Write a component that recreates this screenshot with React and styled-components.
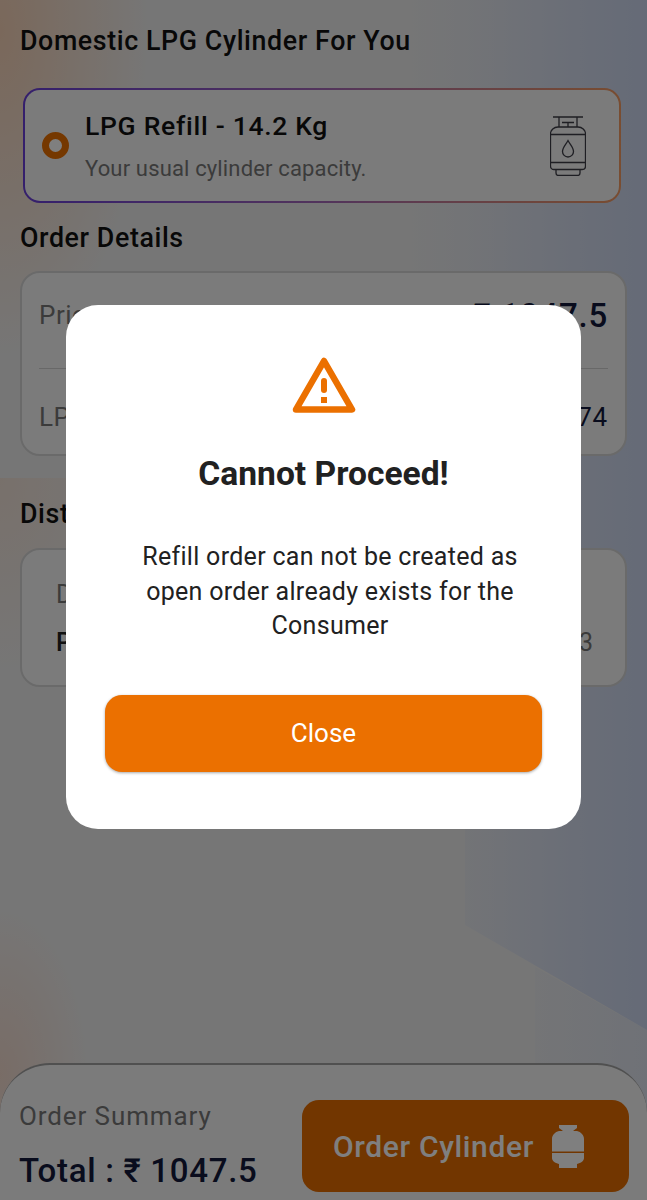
import React from 'react';
import styled, { createGlobalStyle } from 'styled-components';

const GlobalStyle = createGlobalStyle`
  html, body { margin: 0; padding: 0; }
  body { font-family: Roboto, "Liberation Sans", sans-serif; }
  * { box-sizing: border-box; }
`;

const Screen = styled.div`
  position: relative;
  width: 647px;
  height: 1200px;
  overflow: hidden;
  display: flex;
  flex-direction: column;
  padding: 25px 20px 0;
  background:
    radial-gradient(ellipse 130px 200px at 0 0, rgba(248, 205, 175, 0.36), rgba(248, 205, 175, 0)) 0 478px / 100% 722px no-repeat,
    radial-gradient(ellipse 90px 170px at 0 1075px, rgba(248, 190, 160, 0.42), rgba(248, 190, 160, 0)) 0 0 / 100% 1200px no-repeat,
    radial-gradient(ellipse 150px 330px at 0 30px, rgba(250, 190, 145, 0.6), rgba(250, 190, 145, 0)) 0 0 / 100% 478px no-repeat,
    #ededed;

  /* the blue wash on the right, cut off along the diagonal near the bottom */
  &::before {
    content: '';
    position: absolute;
    inset: 0;
    background: linear-gradient(90deg, rgba(190, 205, 240, 0) 62%, rgba(190, 205, 240, 0.15) 72%, rgba(190, 205, 240, 0.5) 88%, rgba(190, 205, 240, 0.72) 100%);
    clip-path: polygon(0 0, 100% 0, 100% 1030px, 465px 925px, 465px 829px, 0 829px);
  }

  &::after {
    content: '';
    position: absolute;
    inset: 0;
    background: linear-gradient(90deg, rgba(190, 205, 240, 0.1) 83%, rgba(190, 205, 240, 0.3) 100%);
    clip-path: polygon(535px 967px, 100% 1030px, 100% 100%, 535px 100%);
  }

  & > * {
    position: relative;
    z-index: 1;
  }
`;

const SectionTitle = styled.h2`
  margin: ${(p) => p.$top || 0}px 0 0;
  font-size: 26.8px;
  line-height: 33px;
  font-weight: 500;
  letter-spacing: 0.6px;
  color: #111;
`;

const ProductCard = styled.div`
  margin: 30px 6px 0 3px;
  height: 115px;
  padding: 0 33px 0 17px;
  display: flex;
  align-items: center;
  border: 2.5px solid transparent;
  border-radius: 17px;
  background:
    linear-gradient(#f6f6f6, #f6f6f6) padding-box,
    linear-gradient(90deg, #6a3fd8 0%, #a468b8 50%, #f29a62 100%) border-box;
`;

const Radio = styled.span`
  flex: none;
  width: 27px;
  height: 27px;
  border-radius: 50%;
  border: 7px solid #eb7000;
  background: #fff;
`;

const ProductText = styled.div`
  flex: 1;
  margin: 2px 0 0 16px;
  display: flex;
  flex-direction: column;
  gap: 11px;
`;

const ProductName = styled.div`
  font-size: 26.5px;
  line-height: 34px;
  font-weight: 500;
  letter-spacing: 0.7px;
  color: #111;
`;

const ProductHint = styled.div`
  font-size: 22px;
  line-height: 30px;
  letter-spacing: 0.15px;
  color: #777;
`;

const InfoCard = styled.div`
  margin-top: ${(p) => p.$top}px;
  height: ${(p) => p.$height}px;
  padding: 0 17px;
  border: 2.5px solid #d4d4d4;
  border-radius: 20px;
  background: #f7f7f7;
  display: flex;
  flex-direction: column;
`;

const InfoRow = styled.div`
  height: ${(p) => p.$height}px;
  padding: ${(p) => p.$padTop}px 0 ${(p) => p.$padBottom}px;
  display: flex;
  justify-content: space-between;
  align-items: center;
  font-size: 26px;
  letter-spacing: 0.5px;
  color: #777;
`;

const RowValue = styled.span`
  font-size: ${(p) => p.$size}px;
  font-weight: ${(p) => p.$weight};
  letter-spacing: 0.8px;
  color: #12183a;
`;

const Divider = styled.div`
  height: 1px;
  background: #d0d0d0;
`;

const DistributorCard = styled(InfoCard)`
  padding: 28px 32px 0 34px;
  justify-content: flex-start;
`;

const DistributorLabel = styled.div`
  font-size: 25px;
  line-height: 34px;
  color: #777;
`;

const DistributorRow = styled.div`
  margin-top: 14px;
  display: flex;
  justify-content: space-between;
  align-items: center;
  font-size: 25px;
  line-height: 34px;
  font-weight: 500;
  color: #222;
`;

const DistributorPhone = styled.span`
  font-weight: 400;
  color: #777;
`;

const Footer = styled.div`
  && {
    position: absolute;
  }
  left: 0;
  right: 0;
  bottom: 0;
  height: 137px;
  padding: 35px 18px 8px 19px;
  display: flex;
  justify-content: space-between;
  border-top: 2px solid #a0a0a0;
  border-radius: 50px 50px 0 0;
  background: #f6f6f6;
`;

const SummaryText = styled.div`
  display: flex;
  flex-direction: column;
`;

const SummaryLabel = styled.div`
  margin-top: -1px;
  font-size: 26px;
  line-height: 34px;
  letter-spacing: 0.9px;
  color: #777;
`;

const SummaryTotal = styled.div`
  margin-top: 19px;
  font-size: 33px;
  line-height: 38px;
  font-weight: 500;
  letter-spacing: 0.7px;
  color: #12183a;
`;

const OrderButton = styled.button`
  width: 327px;
  height: 92px;
  padding: 0 0 0 31px;
  border: 0;
  border-radius: 17px;
  background: #e56c00;
  display: flex;
  align-items: center;
  justify-content: flex-start;
  gap: 18px;
  font-family: inherit;
  font-size: 30px;
  font-weight: 500;
  letter-spacing: 0.65px;
  color: #fff;
`;

const Overlay = styled.div`
  && {
    position: absolute;
  }
  inset: 0;
  background: rgba(0, 0, 0, 0.5);
`;

const Modal = styled.div`
  && {
    position: absolute;
  }
  left: 66px;
  top: 305px;
  width: 515px;
  height: 524px;
  padding: 52px 39px 0;
  border-radius: 32px;
  background: #fff;
  display: flex;
  flex-direction: column;
  align-items: center;
`;

const ModalTitle = styled.h1`
  margin: 37px 0 0;
  font-size: 33.6px;
  line-height: 44px;
  font-weight: 700;
  color: #212121;
`;

const ModalBody = styled.p`
  margin: 44px 0 0;
  padding-left: 13px;
  width: 100%;
  text-align: center;
  font-size: 25px;
  line-height: 34.5px;
  letter-spacing: 0.3px;
  color: #212121;
`;

const CloseButton = styled.button`
  margin-top: 51px;
  width: 437px;
  height: 77px;
  flex: none;
  border: 0;
  border-radius: 17px;
  background: #eb7000;
  box-shadow: 0 1px 3px rgba(0, 0, 0, 0.35);
  font-family: inherit;
  font-size: 26px;
  color: #fff;
`;

const CylinderOutline = () => (
  <svg width="36" height="60" viewBox="0 0 36 60" fill="none" stroke="#3d3d46" strokeWidth="1.3">
    <path d="M3 1h30M9 1v10M27 1v10M12 6.500h12M18 6.500V11" />
    <path d="M8 11h20c4 0 7.500 3 7.500 7v32c0 2-1.500 3.500-3.500 3.500H4c-2 0-3.500-1.500-3.500-3.500V18c0-4 3.500-7 7.500-7z" />
    <path d="M.5 18.500h35M.5 46.500h35" />
    <path d="M6 53.500V57c0 1.500 1 2.500 2.500 2.500h19c1.500 0 2.500-1 2.500-2.500v-3.500" />
    <path d="M18 24.500c-2.500 4.500-5.500 7-5.500 11a5.500 5.500 0 0 0 11 0c0-4-3-6.500-5.500-11z" />
  </svg>
);

const CylinderSolid = () => (
  <svg width="32" height="43" viewBox="0 0 32 43" fill="#fff">
    <path d="M7 0h18v3l-4 3h4c4 1 7 4 7 8v12.500H0V14c0-4 3-7 7-8h4L7 3z" />
    <path d="M0 28h32v5c0 3-3 5-7 6v4H7v-4c-4-1-7-3-7-6z" />
  </svg>
);

const WarningIcon = () => (
  <svg width="64" height="58" viewBox="0 0 64 58" fill="none">
    <path d="M32 4 L60 52.500 H4 Z" stroke="#eb7000" strokeWidth="6.500" strokeLinejoin="round" />
    <rect x="29" y="21" width="6" height="15" rx="3" fill="#eb7000" />
    <rect x="29" y="40" width="6" height="6" fill="#eb7000" />
  </svg>
);

export default function App() {
  return (
    <Screen>
      <GlobalStyle />
      <SectionTitle>Domestic LPG Cylinder For You</SectionTitle>
      <ProductCard>
        <Radio />
        <ProductText>
          <ProductName>LPG Refill - 14.2 Kg</ProductName>
          <ProductHint>Your usual cylinder capacity.</ProductHint>
        </ProductText>
        <CylinderOutline />
      </ProductCard>
      <SectionTitle $top={19}>Order Details</SectionTitle>
      <InfoCard $top={16} $height={185}>
        <InfoRow $height={94.5} $padTop={0} $padBottom={10}>
          <span>Price</span>
          <RowValue $size={33} $weight={500}>₹ 1047.5</RowValue>
        </InfoRow>
        <Divider />
        <InfoRow $height={85} $padTop={12} $padBottom={0}>
          <span>LPG ID</span>
          <RowValue $size={26} $weight={400}>7400000074</RowValue>
        </InfoRow>
      </InfoCard>
      <SectionTitle $top={42}>Distributor Details</SectionTitle>
      <DistributorCard $top={17} $height={139}>
        <DistributorLabel>Distributor</DistributorLabel>
        <DistributorRow>
          <span>PRIYA GAS</span>
          <DistributorPhone>0000000003</DistributorPhone>
        </DistributorRow>
      </DistributorCard>
      <Footer>
        <SummaryText>
          <SummaryLabel>Order Summary</SummaryLabel>
          <SummaryTotal>Total : ₹ 1047.5</SummaryTotal>
        </SummaryText>
        <OrderButton>
          Order Cylinder
          <CylinderSolid />
        </OrderButton>
      </Footer>
      <Overlay />
      <Modal>
        <WarningIcon />
        <ModalTitle>Cannot Proceed!</ModalTitle>
        <ModalBody>Refill order can not be created as open order already exists for the Consumer</ModalBody>
        <CloseButton>Close</CloseButton>
      </Modal>
    </Screen>
  );
}
